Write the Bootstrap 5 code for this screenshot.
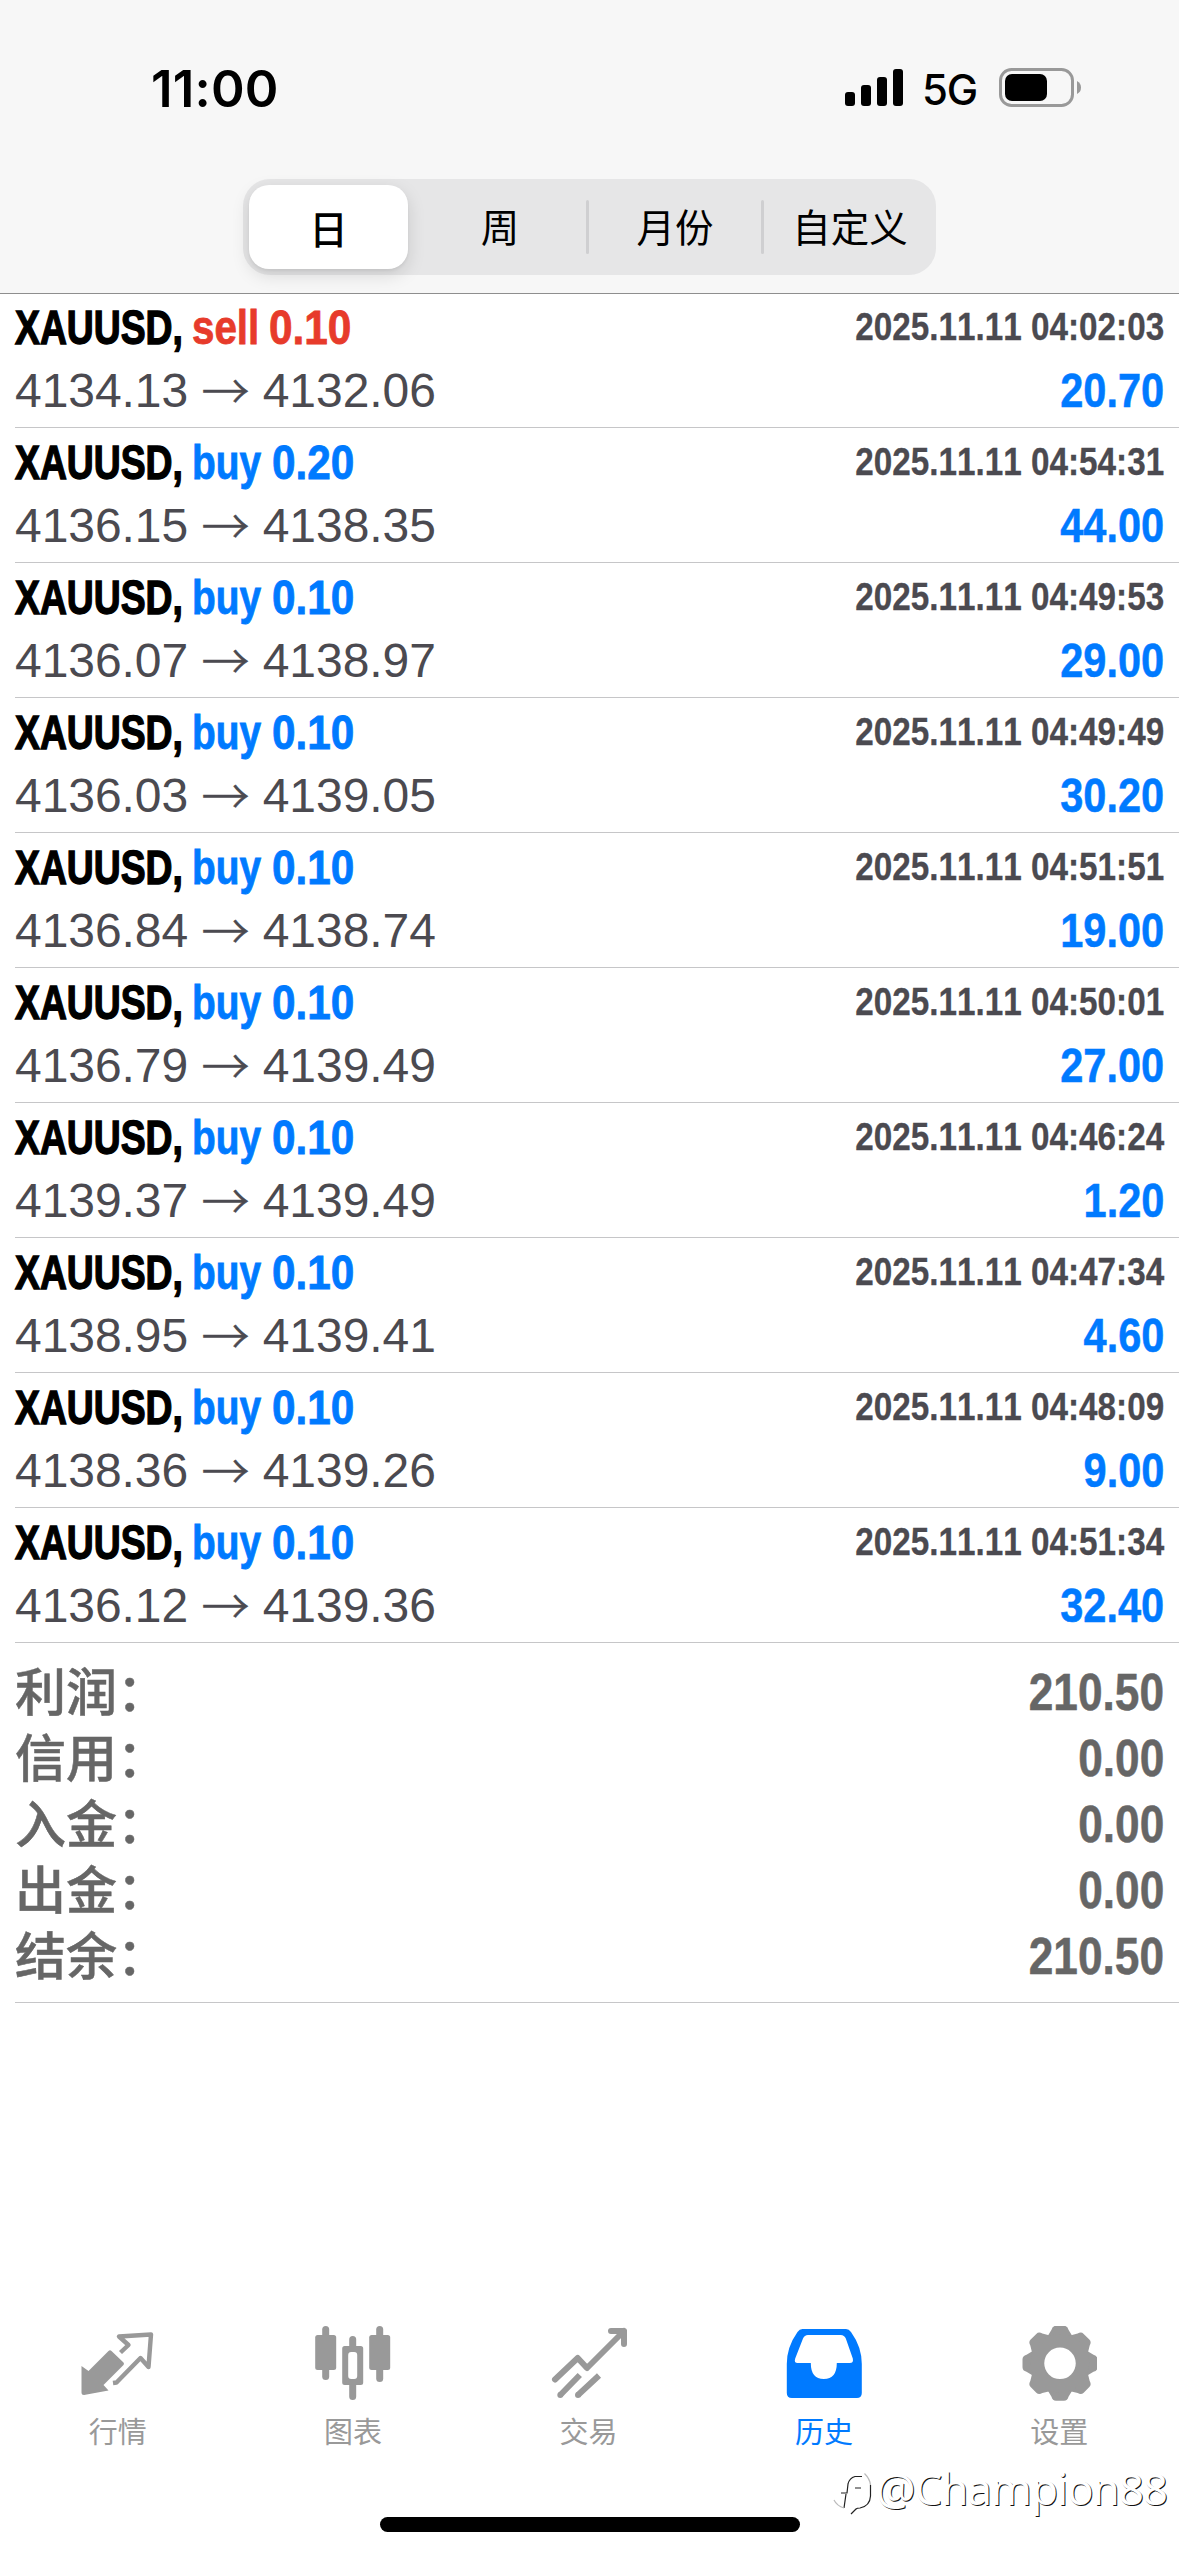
<!DOCTYPE html>
<html lang="zh-CN">
<head>
<meta charset="utf-8">
<meta name="viewport" content="width=device-width, initial-scale=1">
<title>历史</title>
<link href="https://cdn.jsdelivr.net/npm/bootstrap@5.3.0/dist/css/bootstrap.min.css" rel="stylesheet">
<style>
  html, body { height: 100%; }
  body { font-family: "Liberation Sans", "Noto Sans CJK SC", sans-serif; color: #000; background: #fff; font-kerning: none; overflow: hidden; }
  .phone { width: 1179px; height: 2556px; }
  .top-area { height: 294px; background: #f7f7f7; border-bottom: 1px solid #8e8e8e; }
  .status-bar { height: 179px; padding: 55px 98px 0 151px; font-family: Inter, sans-serif; }
  .clock { font-size: 51px; font-weight: 600; line-height: 67px; letter-spacing: .2px; }
  .net { font-size: 42px; font-weight: 500; line-height: 67px; letter-spacing: -1.2px; margin: 1px 22px 0 19px; }
  .signal { margin-top: 14px; }
  .battery { margin-top: 13px; }
  .segments { width: 693px; height: 96px; border-radius: 27px; background: #e6e6e7; padding: 6px 0 6px 6px; margin-left: 243px; font-family: "Noto Sans CJK SC", sans-serif; font-size: 38.5px; }
  .seg { width: 172px; line-height: 84px; margin-top: -4px; text-align: center; color: #000; }
  .seg-on { width: 159px; height: 84px; line-height: 78px; margin: 0 6px 0 0; padding: 0; border: 0; border-radius: 20px; font-size: 38.5px; color: #000; background: #fff; box-shadow: 0 6px 18px rgba(0,0,0,.13), 0 2px 3px rgba(0,0,0,.05); font-weight: 500; }
  .seg-line { width: 3px; height: 54px; border-radius: 2px; background: #cfcfd1; }
  .deals { margin-left: 15px; }
  .deal { height: 135px; padding: 0 15px 0 0; border-bottom: 1px solid #c6c6c8; }
  .deal:first-child { height: 134px; }
  .fit { display: inline-block; transform-origin: 0 50%; white-space: pre; }
  .fit-end { display: inline-block; transform-origin: 100% 50%; transform: scaleX(.865); white-space: pre; }
  .line-a { height: 68px; padding-top: 3px; }
  .deal:first-child .line-a { height: 67px; padding-top: 2px; }
  .line-b { height: 55px; margin-top: 2px; }
  .symbol-box, .side-box { white-space: nowrap; font-size: 48px; line-height: 64px; font-weight: 700; }
  .symbol-box { width: 177px; }
  .symbol-box .fit { transform: scaleX(.777); -webkit-text-stroke: 1.4px #000; }
  .side-box { width: 80px; }
  .side-box .fit { transform: scaleX(.81); -webkit-text-stroke: .8px; }
  .sell-ink.side-box .fit { transform: scaleX(.84); }
  .sell-ink.side-box { width: 77px; }
  .vol { font-size: 48px; line-height: 64px; font-weight: 700; -webkit-text-stroke: .8px; }
  .vol.fit { transform: scaleX(.882); }
  .buy { color: #007aff; }
  .sell-ink { color: #e73b2b; }
  .when { font-size: 39px; line-height: 62px; font-weight: 700; color: #4b4a50; -webkit-text-stroke: .3px; }
  .when.fit-end { transform: scaleX(.853); }
  .price { font-size: 48px; line-height: 55px; letter-spacing: -.05px; color: #4b4a50; }
  .arrow { font-family: "Noto Sans CJK SC", sans-serif; font-weight: 300; line-height: 1px; vertical-align: -1.5px; -webkit-text-stroke: .5px; }
  .gain { font-size: 48px; line-height: 55px; font-weight: 700; color: #007aff; -webkit-text-stroke: .5px; }
  .totals { margin-left: 15px; height: 360px; padding: 15px 15px 0 0; border-bottom: 1px solid #c6c6c8; color: #666; }
  .total { height: 66px; font-size: 51px; line-height: 66px; }
  .total-name { font-weight: 500; padding-top: 3px; -webkit-text-stroke: .5px; }
  .total-sum { font-weight: 700; padding-top: 1.5px; -webkit-text-stroke: .5px; }
  .total-sum.fit-end { transform: scaleX(.867); }
  .tabs { height: 130px; margin-bottom: 100px; padding-right: 2px; }
  .tab { color: #999; font-family: "Noto Sans CJK SC", sans-serif; font-size: 29px; line-height: 40px; }
  .tab svg { width: 76px; height: 76px; margin-bottom: 8px; }
  .tab.active { color: #007aff; }
  .home-bar { width: 420px; height: 15px; border-radius: 8px; background: #000; left: 380px; top: 2517px; }
  .stamp { left: 833px; top: 2458px; font-family: "Noto Sans", sans-serif; font-size: 44px; line-height: 60px; letter-spacing: -1.1px; color: #fff; text-shadow: 1px 1px 0 #111; }
  .stamp svg { margin: 10px 1px 0 0; }
</style>
</head>
<body>
<main class="phone d-flex flex-column position-relative">
  <header class="top-area flex-shrink-0">
    <div class="status-bar d-flex align-items-start">
      <span class="clock me-auto">11:00</span>
      <svg class="signal" width="58" height="38" viewBox="0 0 58 38"><rect y="23" width="10" height="14" rx="3"/><rect x="16" y="16" width="10" height="21" rx="3"/><rect x="32" y="8" width="10" height="29" rx="3"/><rect x="48" width="10" height="37" rx="3"/></svg>
      <span class="net">5G</span>
      <svg class="battery" width="82" height="39" viewBox="0 0 82 39"><rect x="1.5" y="1.5" width="72" height="36" rx="11" fill="none" stroke="#999" stroke-width="3"/><rect x="6" y="6" width="42" height="27" rx="7"/><path d="M78 13q4 2 4 6.500t-4 6.500z" fill="#999"/></svg>
    </div>
    <div class="segments d-flex align-items-center">
      <button class="btn seg-on flex-shrink-0">日</button>
      <span class="seg flex-shrink-0">周</span>
      <i class="seg-line flex-shrink-0"></i>
      <span class="seg flex-shrink-0">月份</span>
      <i class="seg-line flex-shrink-0"></i>
      <span class="seg flex-shrink-0">自定义</span>
    </div>
  </header>
  <section class="deals flex-shrink-0" id="deals"></section>
  <section class="totals flex-shrink-0">
    <div class="total d-flex justify-content-between"><span class="total-name">利润：</span><span class="total-sum fit-end">210.50</span></div>
    <div class="total d-flex justify-content-between"><span class="total-name">信用：</span><span class="total-sum fit-end">0.00</span></div>
    <div class="total d-flex justify-content-between"><span class="total-name">入金：</span><span class="total-sum fit-end">0.00</span></div>
    <div class="total d-flex justify-content-between"><span class="total-name">出金：</span><span class="total-sum fit-end">0.00</span></div>
    <div class="total d-flex justify-content-between"><span class="total-name">结余：</span><span class="total-sum fit-end">210.50</span></div>
  </section>
  <nav class="tabs nav nav-fill mt-auto flex-nowrap">
    <a class="tab nav-item text-decoration-none d-flex flex-column align-items-center">
      <svg viewBox="0 0 76 76" fill="currentColor"><path d="M1.500 40l7 5 20-20q1.500-1.500 3 0l12 11.500q1 1 0 2.500l-20 20 5 5.500-24.500 4.500q-2.500 0-2.500-2.500z"/><path d="M40.500 26.500l8-7.500-9.500-8.500 32-2-2.500 32.500-8-9-24 24.500-3.500.5" fill="none" stroke="currentColor" stroke-width="4.400" stroke-linejoin="round"/></svg>
      <span>行情</span></a>
    <a class="tab nav-item text-decoration-none d-flex flex-column align-items-center">
      <svg viewBox="0 0 76 76" fill="currentColor"><rect x="7.200" width="7" height="54" rx="3.500"/><rect x=".2" y="9" width="21" height="35" rx="2.500"/><rect x="61.200" width="7" height="56" rx="3.500"/><rect x="54.200" y="9" width="21" height="35" rx="2.500"/><path d="M34.200 20v-6.500a3.500 3.500 0 0 1 7 0v6.500h4.500q2.500 0 2.500 2.500v34q0 2.500-2.500 2.500h-4.500v11.500a3.500 3.500 0 0 1-7 0v-11.500h-4.500q-2.500 0-2.500-2.500v-34q0-2.500 2.500-2.500zM33.200 29v21q0 3 3 3h3q3 0 3-3v-21q0-3-3-3h-3q-3 0-3 3z" fill-rule="evenodd"/></svg>
      <span>图表</span></a>
    <a class="tab nav-item text-decoration-none d-flex flex-column align-items-center">
      <svg viewBox="0 0 76 76" fill="currentColor" stroke="currentColor" stroke-width="6"><g fill="none" stroke-linecap="round" stroke-linejoin="round"><path d="M4 53.500l22.700-21.500 9.300 10 37-37M60 5h13v13"/></g><path fill="none" d="M9.300 69l19.500-20M27 69l21-19.500"/><g stroke="none"><circle cx="9.300" cy="69" r="3"/><circle cx="27" cy="69" r="3"/></g></svg>
      <span>交易</span></a>
    <a class="tab active nav-item text-decoration-none d-flex flex-column align-items-center">
      <svg viewBox="0 0 76 76" fill="currentColor" fill-rule="evenodd"><path d="M16.500 3h43.500q3 0 5 3 10.800 15 10.800 32v29q0 5-5 5h-65q-5 0-5-5v-29q0-17 10.700-32 2-3 5-3zM22 9q-3.500 0-5 3.500l-7.800 20q-1.500 4.500 2.500 4.500h13.100q0 16 13 16t13-16h13q4 0 3-4.500l-7-20q-1.500-3.500-5-3.500z"/></svg>
      <span>历史</span></a>
    <a class="tab nav-item text-decoration-none d-flex flex-column align-items-center">
      <svg viewBox="-39 -37.300 76 76" fill="currentColor"><g id="gear"></g></svg>
      <span>设置</span></a>
  </nav>
  <div class="home-bar position-absolute"></div>
  <div class="stamp position-absolute d-flex">
    <svg width="42" height="48" viewBox="0 0 42 48" fill="none" stroke="#222" stroke-width="1.200"><path d="M8 25h6l1-9q1.500-6 7-7.500h7M13 26l-2 14M22 20h6M18 46l5-5q1-1 4-1 10-2 10.500-12v-11"/><path stroke="#bbb" d="M1 32q3 6 10 8M37.500 17q-.5-6-6-11.500"/></svg>
    <span>@Champion88</span>
  </div>
</main>
<script src="https://cdn.jsdelivr.net/npm/bootstrap@5.3.0/dist/js/bootstrap.bundle.min.js"></script>
<script>
  const deals = [
    ['sell', '0.10', '04:02:03', '4134.13', '4132.06', '20.70'],
    ['buy', '0.20', '04:54:31', '4136.15', '4138.35', '44.00'],
    ['buy', '0.10', '04:49:53', '4136.07', '4138.97', '29.00'],
    ['buy', '0.10', '04:49:49', '4136.03', '4139.05', '30.20'],
    ['buy', '0.10', '04:51:51', '4136.84', '4138.74', '19.00'],
    ['buy', '0.10', '04:50:01', '4136.79', '4139.49', '27.00'],
    ['buy', '0.10', '04:46:24', '4139.37', '4139.49', '1.20'],
    ['buy', '0.10', '04:47:34', '4138.95', '4139.41', '4.60'],
    ['buy', '0.10', '04:48:09', '4138.36', '4139.26', '9.00'],
    ['buy', '0.10', '04:51:34', '4136.12', '4139.36', '32.40']
  ];
  document.getElementById('deals').innerHTML = deals.map(([side, vol, time, from, to, gain]) => {
    const ink = side === 'sell' ? 'sell-ink' : 'buy';
    return `
    <article class="deal">
      <div class="line-a d-flex">
        <span class="symbol-box"><span class="fit">XAUUSD,</span></span>
        <span class="side-box ${ink}"><span class="fit">${side}</span></span>
        <span class="vol fit ${ink}">${vol}</span>
        <span class="when fit-end ms-auto">2025.11.11 ${time}</span>
      </div>
      <div class="line-b d-flex justify-content-between">
        <span class="price">${from} <span class="arrow">→</span> ${to}</span>
        <span class="gain fit-end">${gain}</span>
      </div>
    </article>`;
  }).join('');
  const teeth = [];
  for (let i = 0; i < 8; i++) teeth.push(`<path transform="rotate(${i * 45})" d="M-13-26l4.500-7.500q1-4 4.500-4h8q3.500 0 4.500 4l4.500 7.500z"/>`);
  document.getElementById('gear').innerHTML = teeth.join('') + '<circle r="22.500" fill="none" stroke="currentColor" stroke-width="13.500"/>';
</script>
</body>
</html>
